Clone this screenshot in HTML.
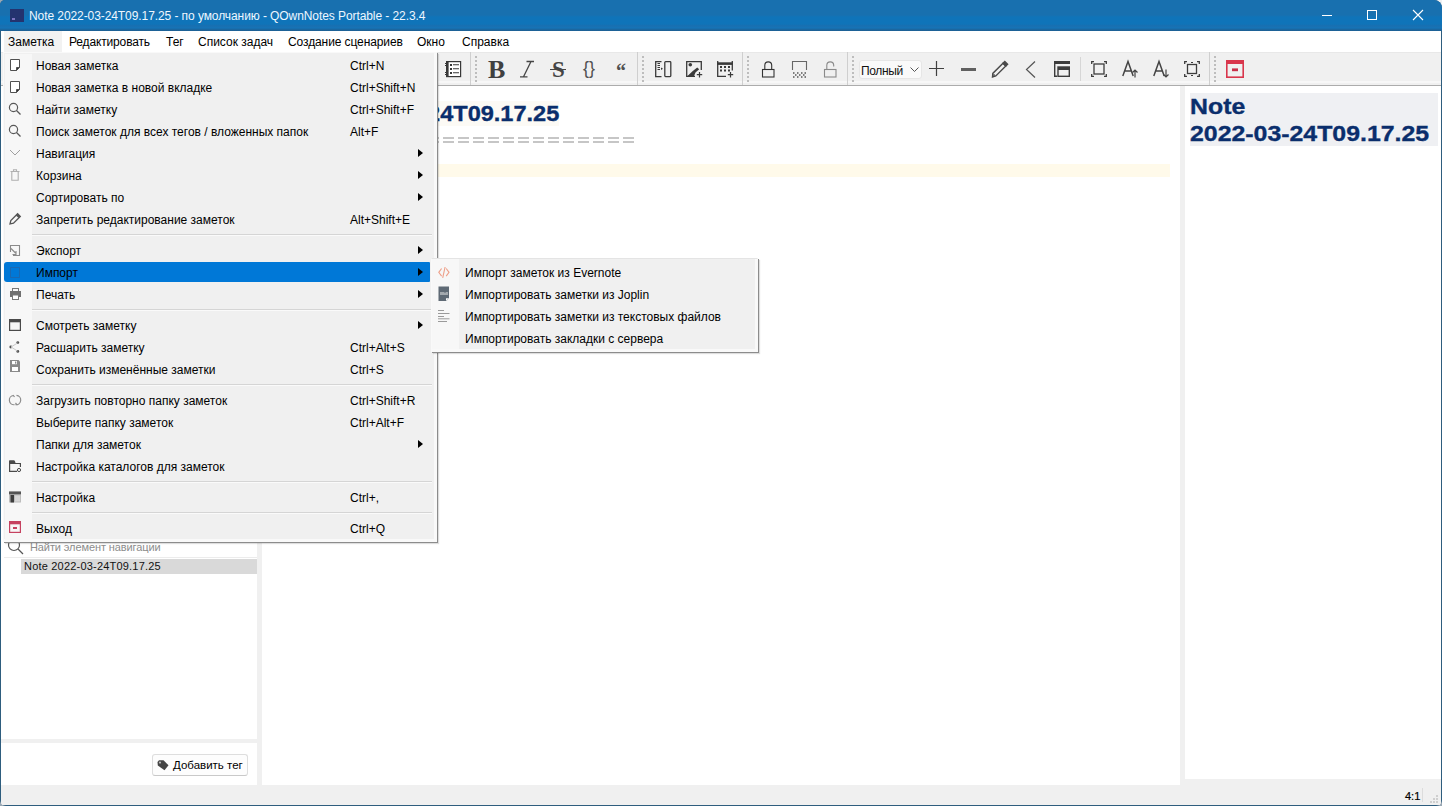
<!DOCTYPE html>
<html><head><meta charset="utf-8">
<style>
*{margin:0;padding:0;box-sizing:border-box}
html,body{width:1442px;height:806px;overflow:hidden;background:#9aa8b4;font-family:"Liberation Sans",sans-serif;font-size:12px;color:#000}
.a{position:absolute}
svg{position:absolute;overflow:visible}
#win{position:absolute;left:0;top:0;width:1442px;height:806px;background:#2e5d7e;border-radius:5px 8px 6px 6px;overflow:hidden}
#title{position:absolute;left:0;top:0;width:1442px;height:31px;background:linear-gradient(#1870af 0,#1870af 15px,#0f74b9 17px,#0f74b9 24px,#1a6fb0 26px,#1474b8 28px,#1a6aa5 29px,#1d5f92 31px)}
#ttext{position:absolute;left:29px;top:9px;color:#eef7ff;font-size:12px;letter-spacing:-0.08px;white-space:nowrap}
#menubar{position:absolute;left:1px;top:31px;width:1440px;height:21px;background:#fff}
.mb{position:absolute;top:4px;white-space:nowrap}
#toolbar{position:absolute;left:1px;top:52px;width:1440px;height:34px;background:linear-gradient(#f0f0f0 0,#f0f0f0 28px,#f7f7f7 28px,#f7f7f7 30px,#f0f0f0 30px);border-top:1px solid #e8e8e8;border-bottom:1px solid #acacac}
#body{position:absolute;left:1px;top:52px;width:1440px;height:753px;background:#f0f0f0}
#left{position:absolute;left:1px;top:86px;width:256px;height:653px;background:#fff}
#tagp{position:absolute;left:1px;top:743px;width:256px;height:42px;background:#fff}
#editor{position:absolute;left:262px;top:86px;width:918px;height:699px;background:#fff}
#prev{position:absolute;left:1185px;top:86px;width:256px;height:693px;background:#fff}
#status{position:absolute;left:1px;top:785px;width:1440px;height:20px;background:#f0f0f0}
.sepv{position:absolute;top:52px;width:1px;height:33px;background:#cfcfcf}
.hdl{position:absolute;top:56px;width:2px;height:27px;background-image:linear-gradient(#bdbdbd 50%,transparent 50%);background-size:2px 4px}
.menu{position:absolute;background:#f0f0f0;border:1px solid #f9f9f9;box-shadow:inset -2px -2px 0 #f9f9f9,1px 1px 0 #8c8c8c,2px 2px 1px rgba(0,0,0,.13)}
.mi{position:absolute;left:0;height:22px;white-space:nowrap}
.mt{position:absolute;left:32px;top:4px}
.ms{position:absolute;left:346px;top:4px}
.sep{position:absolute;left:28px;right:4px;height:1px;background:#d5d5d5;box-shadow:0 1px 0 #fafafa}
.arr{position:absolute;left:414px;top:6px;width:0;height:0;border-left:5px solid #000;border-top:4px solid transparent;border-bottom:4px solid transparent}
</style></head><body>
<div class="a" style="left:1432px;top:0;width:10px;height:10px;background:#eef0f2"></div>
<div id="win">
 <div id="title">
  <div class="a" style="left:10px;top:9px;width:14px;height:13px;background:#24336f"></div>
  <div class="a" style="left:12px;top:18px;width:3px;height:2px;background:#7c74c0"></div>
  <div id="ttext">Note 2022-03-24T09.17.25 - по умолчанию - QOwnNotes Portable - 22.3.4</div>
  <!-- window controls -->
  <div class="a" style="left:1322px;top:15px;width:10px;height:1px;background:#fff"></div>
  <div class="a" style="left:1367px;top:10px;width:10px;height:10px;border:1px solid #fff"></div>
  <svg style="left:1413px;top:10px" width="10" height="10" viewBox="0 0 10 10"><path d="M0 0L10 10M10 0L0 10" stroke="#fff" stroke-width="1.1"/></svg>
 </div>
 <div id="menubar">
  <div class="a" style="left:3px;top:0;width:58px;height:21px;background:#f2f2f2"></div>
  <div class="mb" style="left:7px">Заметка</div>
  <div class="mb" style="left:68px;letter-spacing:-0.15px">Редактировать</div>
  <div class="mb" style="left:165px">Тег</div>
  <div class="mb" style="left:197px">Список задач</div>
  <div class="mb" style="left:287px;letter-spacing:-0.1px">Создание сценариев</div>
  <div class="mb" style="left:416px">Окно</div>
  <div class="mb" style="left:461px">Справка</div>
 </div>
 <div id="body"></div>
 <div id="toolbar"></div>
 <div id="left"></div>
 <div id="tagp"></div>
 <div id="editor"></div>
 <div id="prev"></div>
 <div id="status"></div>
</div>

<!-- toolbar contents -->
<div class="sepv" style="left:470px"></div><div class="hdl" style="left:475px"></div>
<div class="sepv" style="left:637px"></div><div class="hdl" style="left:642px"></div>
<div class="sepv" style="left:742px"></div><div class="hdl" style="left:747px"></div>
<div class="sepv" style="left:847px"></div><div class="hdl" style="left:852px"></div>
<div class="sepv" style="left:1209px"></div><div class="hdl" style="left:1214px"></div>
<div class="a" style="left:1080px;top:57px;width:1px;height:24px;background:#d6d6d6"></div>
<svg style="left:445px;top:60px" width="17" height="18" viewBox="0 0 17 18" fill="none" stroke="#383838">
 <rect x="1.6" y="1.6" width="14" height="15" stroke-width="1.2" fill="#fff"/><rect x="1" y="1" width="2.6" height="16" fill="#383838" stroke="none"/>
 <path d="M0 3.5h2M0 5.5h2M0 12.5h2M0 14.5h2" stroke-width="1"/>
 <path d="M5 4h2v2h-2zM5 8h2v2h-2zM5 12h2v2h-2z" fill="#383838" stroke="none"/>
 <path d="M8 4.8h6M8 8.8h6M8 12.8h6" stroke-width="1.1"/>
</svg>
<div class="a" style="left:488px;top:55px;font-family:'Liberation Serif',serif;font-weight:bold;font-size:26px;line-height:30px;color:#404040">B</div>
<svg style="left:519px;top:60px" width="16" height="18" viewBox="0 0 16 18" fill="none" stroke="#454545" stroke-width="1.3"><path d="M7.5 1.5H15M1 16.8H8.5M12 1.5L4.5 16.8"/></svg>
<div class="a" style="left:552px;top:57px;font-family:'Liberation Serif',serif;font-weight:bold;font-size:23px;line-height:26px;color:#454545">S</div>
<div class="a" style="left:550px;top:68.6px;width:16px;height:1.4px;background:#454545"></div>
<div class="a" style="left:583px;top:58px;font-size:18px;line-height:20px;color:#505050">{}</div>
<div class="a" style="left:616px;top:60px;font-family:'Liberation Serif',serif;font-weight:bold;font-size:20px;line-height:22px;color:#505050">“</div>
<svg style="left:655px;top:61px" width="17" height="17" viewBox="0 0 17 17" fill="none" stroke="#3a3a3a" stroke-width="1.3">
 <path d="M6.5 0.7H0.7V15.6H6.5"/><path d="M2.5 2.5h2.5M2.5 4.5h2.5M2.5 6.5h2.5M2.5 8.5h2.5" stroke-width="1"/>
 <path d="M6 6.4L8 7.7L6 9Z" fill="#3a3a3a" stroke="none"/><rect x="9.8" y="0.7" width="6" height="14.9" rx="0.8"/>
</svg>
<svg style="left:686px;top:61px" width="17" height="17" viewBox="0 0 17 17" fill="none" stroke="#3a3a3a" stroke-width="1.3">
 <path d="M15.3 9V0.7H0.7V15.4H9"/><circle cx="4.3" cy="3.8" r="1.8" fill="#3a3a3a" stroke="none"/>
 <path d="M1 15.4L6.5 10.2L11.2 6.6L13.2 8.2L9.5 11.5L7.8 15.4Z" fill="#3a3a3a" stroke="none"/>
 <path d="M13.5 11v5.6M10.8 13.6h5.4" stroke-width="1.2"/>
</svg>
<svg style="left:717px;top:61px" width="17" height="17" viewBox="0 0 17 17" fill="none" stroke="#3a3a3a" stroke-width="1.3">
 <path d="M0.7 0V15.4H9M15.3 0V9.5"/><rect x="0" y="1.3" width="16" height="2.6" fill="#3a3a3a" stroke="none"/>
 <path d="M3 5h2v2h-2zM7 5h2v2h-2zM11 5h2v2h-2zM3 8.5h2v2h-2zM7 8.5h2v2h-2zM11 8.5h2v2h-2z" fill="#3a3a3a" stroke="none"/>
 <path d="M13.5 11v5.6M10.8 13.6h5.4" stroke-width="1.2"/>
</svg>
<svg style="left:762px;top:61px" width="13" height="17" viewBox="0 0 13 17" fill="none" stroke="#333" stroke-width="1.1">
 <rect x="0.5" y="8.5" width="11.5" height="7.5"/><path d="M2.8 8.5V4.3a3.45 3.45 0 0 1 6.9 0V8.5"/>
</svg>
<svg style="left:792px;top:61px" width="15" height="17" viewBox="0 0 15 17" fill="none" stroke="#666" stroke-width="1.1">
 <path d="M0.5 9V0.5h14V9"/>
 <path d="M1 12h1.5M5 12h1.5M9 12h1.5M12.5 12h1.5M3 14h1.5M7 14h1.5M11 14h1.5M1 16h1.5M5 16h1.5M9 16h1.5M12.5 16h1.5" stroke-width="1.6" stroke="#555"/>
</svg>
<svg style="left:824px;top:61px" width="13" height="17" viewBox="0 0 13 17" fill="none" stroke="#8a8a8a" stroke-width="1.1">
 <rect x="0.5" y="8.5" width="11.5" height="7.5"/><path d="M2.8 8.5V4.3a3.45 3.45 0 0 1 6.9 0V5.5"/>
</svg>
<div class="a" style="left:859px;top:60px;width:63px;height:19px;background:#fafafa;border:1px solid #e6e6e6;border-radius:3px"></div>
<div class="a" style="left:861px;top:64px;font-size:12px;letter-spacing:-0.35px;color:#111">Полный</div>
<svg style="left:910px;top:67px" width="9" height="6" viewBox="0 0 9 6" fill="none" stroke="#555" stroke-width="1"><path d="M0.5 0.5l4 4 4-4"/></svg>
<svg style="left:929px;top:61px" width="15" height="15" viewBox="0 0 15 15" fill="none" stroke="#404040" stroke-width="1.2"><path d="M7.5 0v15M0 7.5h15"/></svg>
<div class="a" style="left:961px;top:67.5px;width:15px;height:3px;background:#606060"></div>
<svg style="left:991px;top:60px" width="18" height="18" viewBox="0 0 18 18" fill="none" stroke="#4a4a4a" stroke-width="1.4">
 <path d="M12 3.2L14.8 6L4.8 16L1.5 17L1.8 13.4Z"/><path d="M12 3.2L13.8 1.4L16.6 4.2L14.8 6Z" fill="#4a4a4a"/><circle cx="3" cy="15.5" r="0.9" stroke-width="1"/>
</svg>
<svg style="left:1025px;top:61px" width="11" height="17" viewBox="0 0 11 17" fill="none" stroke="#555" stroke-width="1.2"><path d="M10 0.5L1.5 8.5 10 16.5"/></svg>
<svg style="left:1054px;top:61px" width="16" height="16" viewBox="0 0 16 16" fill="none" stroke="#3c3c3c" stroke-width="1.4">
 <rect x="0" y="0" width="16" height="3" fill="#3c3c3c" stroke="none"/><path d="M0.7 1v15M0.7 15.3H3"/>
 <rect x="4" y="6" width="11.3" height="9.3"/><rect x="4" y="6" width="12" height="3" fill="#3c3c3c" stroke="none"/>
</svg>
<svg style="left:1091px;top:61px" width="16" height="16" viewBox="0 0 16 16" fill="none" stroke="#3c3c3c" stroke-width="1.3">
 <path d="M0.7 3V0.7H3M13 0.7h2.3V3M15.3 13v2.3H13M3 15.3H0.7V13"/><rect x="3" y="3" width="10" height="10"/>
</svg>
<svg style="left:1122px;top:60px" width="17" height="18" viewBox="0 0 17 18" fill="none" stroke="#444" stroke-width="1.5">
 <path d="M0.8 16L6 1.5 11.2 16M2.5 11h7"/><path d="M13 17.5V10M10.5 12.5L13 10l2.5 2.5" stroke-width="1.2"/>
</svg>
<svg style="left:1153px;top:60px" width="17" height="18" viewBox="0 0 17 18" fill="none" stroke="#444" stroke-width="1.5">
 <path d="M0.8 16L6 1.5 11.2 16M2.5 11h7"/><path d="M13 9.5V17M10.5 14.5L13 17l2.5-2.5" stroke-width="1.2"/>
</svg>
<svg style="left:1184px;top:61px" width="16" height="16" viewBox="0 0 16 16" fill="none" stroke="#3c3c3c" stroke-width="1.3">
 <path d="M0.7 3V0.7H3M13 0.7h2.3V3M15.3 13v2.3H13M3 15.3H0.7V13"/><rect x="3.5" y="3.5" width="9" height="9"/>
 <path d="M7 1.5h2M7 14.5h2" stroke-width="1"/>
</svg>
<svg style="left:1226px;top:60px" width="18" height="18" viewBox="0 0 18 18" fill="none" stroke="#d9364c" stroke-width="1.6">
 <rect x="0.8" y="0.8" width="16.4" height="16.4"/><rect x="0" y="0" width="18" height="4" fill="#d9364c" stroke="none"/>
 <path d="M6 9.8h6" stroke="#c8304a" stroke-width="2.8"/>
</svg>

<!-- editor contents -->
<div class="a" style="left:262px;top:101px;width:297px;height:25px;background:#fcfaf5"></div>
<div class="a" style="left:274px;top:101px;font-weight:bold;font-size:22px;transform:scaleX(1.07);transform-origin:0 0;-webkit-text-stroke:0.35px #0a2e6c;color:#0a2e6c;white-space:nowrap">Note 2022-03-24T09.17.25</div>
<div class="a" style="left:263px;top:137px;width:371px;height:2px;background:repeating-linear-gradient(to right,#c6c6c6 0 11px,transparent 11px 15px)"></div><div class="a" style="left:263px;top:141px;width:371px;height:2px;background:repeating-linear-gradient(to right,#c6c6c6 0 11px,transparent 11px 15px)"></div>
<div class="a" style="left:262px;top:164px;width:908px;height:13px;background:#fffaea"></div>

<!-- preview contents -->
<div class="a" style="left:1190px;top:93px;width:248px;height:53px;background:#eff0f3"></div>
<div class="a" style="left:1190px;top:94px;font-weight:bold;font-size:22px;line-height:26.5px;transform:scaleX(1.13);transform-origin:0 0;-webkit-text-stroke:0.35px #0a2e6c;color:#0a2e6c;white-space:nowrap">Note<br>2022-03-24T09.17.25</div>

<!-- left panel -->
<svg style="left:7px;top:538px" width="17" height="17" viewBox="0 0 17 17" fill="none" stroke="#555" stroke-width="1.2"><circle cx="7" cy="7" r="5.5"/><path d="M11 11l5 5"/></svg>
<div class="a" style="left:30px;top:541px;font-size:11px;letter-spacing:-0.1px;color:#8c8c8c">Найти элемент навигации</div>
<div class="a" style="left:4px;top:557px;width:253px;height:1px;background:#ececec"></div>
<div class="a" style="left:21px;top:559px;width:236px;height:15px;background:#d9d9d9"></div>
<div class="a" style="left:24px;top:560px;font-size:11px;letter-spacing:0.2px;color:#111">Note 2022-03-24T09.17.25</div>

<!-- tag panel -->
<div class="a" style="left:152px;top:754px;width:96px;height:22px;background:#fdfdfd;border:1px solid #dedede;border-bottom-color:#c9c9c9;border-radius:3px"></div>
<svg style="left:157px;top:760px" width="12" height="11" viewBox="0 0 12 11"><path d="M0.5 2L2 0.3H6.5L11.5 5.3L7.5 10.3L0.8 5.5Z" fill="#454545"/><circle cx="3" cy="2.6" r="1.1" fill="#bbb"/></svg>
<div class="a" style="left:173px;top:759px;font-size:11.5px;letter-spacing:0px">Добавить тег</div>

<!-- status -->
<div class="a" style="left:1405px;top:790px;font-size:11px;-webkit-text-stroke:0.2px #000">4:1</div>
<div class="a" style="left:1422px;top:788px;width:1px;height:14px;background:#dcdcdc"></div>
<svg style="left:1430px;top:795px" width="9" height="9" viewBox="0 0 9 9" fill="#cfcfcf"><rect x="6" y="0" width="2" height="2"/><rect x="3" y="3" width="2" height="2"/><rect x="6" y="3" width="2" height="2"/><rect x="0" y="6" width="2" height="2"/><rect x="3" y="6" width="2" height="2"/><rect x="6" y="6" width="2" height="2"/></svg>

<!-- main menu -->
<div class="menu" style="left:3px;top:52px;width:434px;height:490px">
 <div class="a" style="left:1px;top:1px;width:27px;height:486px;background:#f7f7f7"></div>
 <div class="mi" style="top:2px"><span class="mt">Новая заметка</span><span class="ms">Ctrl+N</span></div>
 <div class="mi" style="top:24px"><span class="mt">Новая заметка в новой вкладке</span><span class="ms">Ctrl+Shift+N</span></div>
 <div class="mi" style="top:46px"><span class="mt">Найти заметку</span><span class="ms">Ctrl+Shift+F</span></div>
 <div class="mi" style="top:68px"><span class="mt">Поиск заметок для всех тегов / вложенных папок</span><span class="ms">Alt+F</span></div>
 <div class="mi" style="top:90px"><span class="mt">Навигация</span><i class="arr"></i></div>
 <div class="mi" style="top:112px"><span class="mt">Корзина</span><i class="arr"></i></div>
 <div class="mi" style="top:134px"><span class="mt">Сортировать по</span><i class="arr"></i></div>
 <div class="mi" style="top:156px"><span class="mt">Запретить редактирование заметок</span><span class="ms">Alt+Shift+E</span></div>
 <div class="sep" style="top:181px"></div>
 <div class="mi" style="top:187px"><span class="mt">Экспорт</span><i class="arr"></i></div>
 <div class="a" style="left:0;top:209px;width:426px;height:20px;background:#0078d7;border-radius:3px 1px 1px 3px"></div>
 <div class="mi" style="top:209px"><span class="mt">Импорт</span><i class="arr"></i></div>
 <div class="mi" style="top:231px"><span class="mt">Печать</span><i class="arr"></i></div>
 <div class="sep" style="top:256px"></div>
 <div class="mi" style="top:262px"><span class="mt">Смотреть заметку</span><i class="arr"></i></div>
 <div class="mi" style="top:284px"><span class="mt">Расшарить заметку</span><span class="ms">Ctrl+Alt+S</span></div>
 <div class="mi" style="top:306px"><span class="mt">Сохранить изменённые заметки</span><span class="ms">Ctrl+S</span></div>
 <div class="sep" style="top:331px"></div>
 <div class="mi" style="top:337px"><span class="mt">Загрузить повторно папку заметок</span><span class="ms">Ctrl+Shift+R</span></div>
 <div class="mi" style="top:359px"><span class="mt">Выберите папку заметок</span><span class="ms">Ctrl+Alt+F</span></div>
 <div class="mi" style="top:381px"><span class="mt">Папки для заметок</span><i class="arr"></i></div>
 <div class="mi" style="top:403px"><span class="mt">Настройка каталогов для заметок</span></div>
 <div class="sep" style="top:428px"></div>
 <div class="mi" style="top:434px"><span class="mt">Настройка</span><span class="ms">Ctrl+,</span></div>
 <div class="sep" style="top:459px"></div>
 <div class="mi" style="top:465px"><span class="mt">Выход</span><span class="ms">Ctrl+Q</span></div>
</div>

<!-- submenu -->
<div class="menu" style="left:431px;top:258px;width:327px;height:94px;border-top-color:#e4e4e4">
 <div class="a" style="left:0;top:0;width:27px;height:90px;background:#f7f7f7"></div>
 <div class="mi" style="top:3px"><span class="mt" style="left:33px">Импорт заметок из Evernote</span></div>
 <div class="mi" style="top:25px"><span class="mt" style="left:33px">Импортировать заметки из Joplin</span></div>
 <div class="mi" style="top:47px"><span class="mt" style="left:33px">Импортировать заметки из текстовых файлов</span></div>
 <div class="mi" style="top:69px"><span class="mt" style="left:33px">Импортировать закладки с сервера</span></div>
</div>

<!-- menu icons overlay -->
<svg style="left:0;top:0" width="1442" height="806" viewBox="0 0 1442 806" fill="none">
 <g stroke="#505050" stroke-width="1">
  <path d="M10.5 59.5H19.5V67L16.5 70.5H10.5Z" fill="#fff"/><path d="M16.5 70.5V67.5H19.5Z" fill="#333"/>
  <path d="M10.5 81.5H19.5V89L16.5 92.5H10.5Z" fill="#fff"/><path d="M16.5 92.5V89.5H19.5Z" fill="#333"/>
 </g>
 <g stroke="#585858" stroke-width="1.2">
  <circle cx="13.5" cy="107.5" r="4.1"/><path d="M16.5 110.5L20.5 114.5"/>
  <circle cx="13.5" cy="129.5" r="4.1"/><path d="M16.5 132.5L20.5 136.5"/>
 </g>
 <path d="M10 150L15 155L20 150" stroke="#a0a0a0" stroke-width="1"/>
 <g stroke="#b0b0b0" stroke-width="1.1">
  <path d="M10.5 171.5H19.5M13.5 171V169.8H16.5V171"/><path d="M11.8 172V180.3H18.2V172"/>
 </g>
 <g stroke="#555" stroke-width="1.3">
  <path d="M10 224L10.8 220.5L17.6 213.7L20.3 216.4L13.5 223.2Z"/><path d="M16.8 214.5L19.5 217.2" stroke-width="2.6"/>
 </g>
 <g stroke="#8a8a8a" stroke-width="1.1">
  <path d="M13 255.5H19.5V245.5H10.5V252"/><path d="M11 248.5L15.5 253M12.5 254.5H16V251" />
 </g>
 <g stroke="#2a5e9a" stroke-width="1" opacity="0.6">
  <path d="M10.5 267.5H19.5V277.5H10.5Z"/>
 </g>
 <g>
  <rect x="12.5" y="288.5" width="6" height="3" stroke="#777" stroke-width="1"/>
  <rect x="10" y="291" width="11" height="6" fill="#707070"/>
  <rect x="12.5" y="295" width="6" height="4.5" fill="#fff" stroke="#777" stroke-width="1"/>
 </g>
 <g stroke="#4a4a4a" stroke-width="1.2">
  <rect x="9.6" y="319.6" width="10.8" height="10.8"/><path d="M9 321H21" stroke-width="2.6"/>
 </g>
 <g fill="#505050">
  <circle cx="10.8" cy="347" r="1.4"/><circle cx="17.8" cy="342.6" r="1.4"/><circle cx="17.8" cy="351.4" r="1.4"/>
 </g>
 <path d="M11 347L17.5 343M11 347L17.5 351" stroke="#c8c8c8" stroke-width="1"/>
 <g>
  <path d="M10 360H18.5L20 361.5V372H10Z" fill="#8a8a8a"/>
  <rect x="12" y="361" width="5" height="3.2" fill="#fff"/><rect x="15" y="361.5" width="1.3" height="2.2" fill="#8a8a8a"/>
  <rect x="12" y="367" width="6" height="4" fill="#fff"/>
 </g>
 <g stroke="#8c8c8c" stroke-width="1.2">
  <path d="M13.5 395.5A4.6 4.6 0 0 0 14.5 404.7"/><path d="M16.5 395.3A4.6 4.6 0 0 1 15.5 404.7"/>
  <path d="M13 395L14.5 397" /><path d="M17 404.8L15.5 403"/>
 </g>
 <g stroke="#4a4a4a" stroke-width="1.2">
  <path d="M9.6 461V471.4H17M9.6 463.5H20.4V467"/><path d="M9.6 461H14L15 462.5" />
  <path d="M9 460.4H14.2L15.5 463H9Z" fill="#4a4a4a" stroke="none"/>
  <circle cx="19" cy="470" r="1.6" stroke-width="1"/>
 </g>
 <g>
  <rect x="9" y="491.5" width="12" height="11" fill="#bdbdbd"/>
  <rect x="9" y="491.5" width="12" height="2.8" fill="#555"/>
  <rect x="10.5" y="495" width="3.5" height="7.5" fill="#3e3e3e"/>
  <rect x="15" y="495.5" width="5" height="6" fill="#d8d8d8"/>
 </g>
 <g stroke="#c64260" stroke-width="1.2">
  <rect x="9.6" y="521.6" width="10.8" height="10.8"/><path d="M9 523H21" stroke-width="2.6"/><path d="M13 528H17" stroke-width="2"/>
 </g>
 <!-- submenu icons -->
 <g stroke="#ee9f88" stroke-width="1.1">
  <path d="M441.6 268.5L438.8 272.3L441.6 276.1M446.2 268.5L449 272.3L446.2 276.1M445.1 267L442.7 277.8"/>
 </g>
 <g>
  <path d="M438.5 286.5H449V298L446.5 301H438.5Z" fill="#5f6a75"/>
  <path d="M446 301V298.2H449" fill="#fff"/>
  <path d="M440.5 292h1v3h-1zM442.5 292h1v3h-1zM444.5 292.5h1v2.5h-1zM446.5 292h1v3h-1z" fill="#e8e8e8"/>
 </g>
 <g stroke="#9a9a9a" stroke-width="1">
  <path d="M438 310.5H444M438 313.5H449.5M438 316.5H444M438 318.8H449.5M438 321.5H447"/>
 </g>
</svg>
</body></html>
